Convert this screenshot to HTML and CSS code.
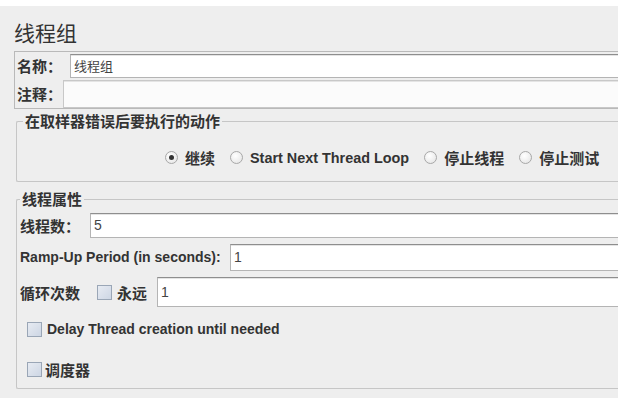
FILE: index.html
```html
<!DOCTYPE html>
<html>
<head>
<meta charset="utf-8">
<title>线程组</title>
<link rel="stylesheet" href="styles.css">
</head>
<body>
<div class="topstrip"></div>
<div class="page">
  <div class="title">线程组</div>

  <div class="namebox">
    <div class="row name-row">
      <span class="label">名称：</span>
      <div class="field">线程组</div>
    </div>
    <div class="row comment-row">
      <span class="label">注释：</span>
      <div class="field comment"></div>
    </div>
  </div>

  <fieldset class="group action">
    <legend>在取样器错误后要执行的动作</legend>
    <div class="radios">
      <span class="opt"><i class="radio on"></i>继续</span>
      <span class="opt en"><i class="radio"></i>Start Next Thread Loop</span>
      <span class="opt"><i class="radio"></i>停止线程</span>
      <span class="opt"><i class="radio"></i>停止测试</span>
    </div>
  </fieldset>

  <fieldset class="group props">
    <legend>线程属性</legend>
    <div class="row threads">
      <span class="label">线程数：</span>
      <div class="field">5</div>
    </div>
    <div class="row ramp">
      <span class="label en">Ramp-Up Period (in seconds):</span>
      <div class="field">1</div>
    </div>
    <div class="row loop">
      <span class="label">循环次数</span>
      <i class="check"></i>
      <span class="label forever">永远</span>
      <div class="field">1</div>
    </div>
    <div class="row chk delay">
      <i class="check"></i>
      <span class="label en">Delay Thread creation until needed</span>
    </div>
    <div class="row chk sched">
      <i class="check"></i>
      <span class="label">调度器</span>
    </div>
  </fieldset>
</div>
</body>
</html>
```

FILE: styles.css
```css
html, body {
  margin: 0;
  padding: 0;
  overflow: hidden;
  background: #eeeeee;
}
body {
  width: 618px;
  height: 398px;
  font-family: "Noto Sans CJK SC", "Liberation Sans", sans-serif;
  color: #2a2a2a;
}
.topstrip {
  height: 6px;
  background: #fff;
}
.page {
  width: 660px;
  padding-left: 14px;
}
.title {
  font-size: 21px;
  line-height: 26px;
  height: 26px;
  padding-top: 13px;
  margin-bottom: 6px;
  color: #333;
}

.row {
  display: flex;
  align-items: center;
}
.label {
  font-size: 15px;
  font-weight: bold;
  white-space: nowrap;
  color: #333;
}
.label.en {
  font-family: "Liberation Sans", "Noto Sans CJK SC", sans-serif;
  font-size: 14px;
}
.field {
  flex: 1;
  height: 21px;
  background: #fff;
  border: 1px solid #b4b4b4;
  border-top-color: #8e8e8e;
  box-shadow: inset 0 1px 0 #e4e4e4;
  font-family: "Liberation Sans", "Noto Sans CJK SC", sans-serif;
  font-size: 14px;
  line-height: 21px;
  padding-left: 3px;
  color: #444;
}

/* name / comment */
.namebox {
  border: 1px solid #b9b9b9;
  border-right: none;
  height: 56px;
}
.name-row {
  height: 27px;
  padding-left: 2px;
}
.name-row .label { width: 53px; }
.name-row .field {
  height: 22px;
  font-family: "Noto Sans CJK SC", sans-serif;
  font-size: 13px;
  font-weight: normal;
  color: #444;
}
.comment-row {
  height: 29px;
  padding-left: 2px;
}
.comment-row .label { width: 46px; }
.comment-row .field.comment {
  height: 26px;
  border-color: #c8c8c8;
  background: #fbfbfb;
}

/* fieldsets */
.group {
  margin: 0 0 0 2px;
  padding: 0;
  border: 1px solid #c6c6c6;
  border-right: none;
  border-radius: 2px;
}
.group legend {
  font-size: 15px;
  font-weight: bold;
  color: #333;
  padding: 0 2px;
  line-height: 18px;
}
.action {
  margin-top: 3px;
  height: 68px;
}
.action legend { margin-left: 6px; }
.radios {
  display: flex;
  align-items: center;
  gap: 15px;
  padding-left: 148px;
  padding-top: 17px;
}
.opt {
  display: flex;
  align-items: center;
  font-size: 15px;
  font-weight: bold;
  color: #333;
  white-space: nowrap;
}
.opt.en {
  font-family: "Liberation Sans", sans-serif;
  font-size: 14.4px;
}
.radio {
  width: 11px;
  height: 11px;
  border-radius: 50%;
  border: 1px solid #a8a8a8;
  background: radial-gradient(circle at 40% 35%, #ffffff, #e2e2e2);
  margin-right: 7px;
  position: relative;
}
.radio.on::after {
  content: "";
  position: absolute;
  left: 3px;
  top: 3px;
  width: 5px;
  height: 5px;
  border-radius: 50%;
  background: #333;
}

.props {
  margin-top: 8px;
  height: 197px;
}
.props legend { margin-left: 3px; }
.props .row { padding-left: 3px; }
.threads {
  height: 28px;
  margin-top: 3px;
}
.threads .label { width: 70px; }
.threads .field { height: 23px; line-height: 23px; }
.ramp {
  height: 30px;
  margin-top: 3px;
}
.ramp .label { width: 210px; }
.ramp .field { height: 25px; line-height: 25px; }
.loop {
  height: 32px;
  margin-top: 4px;
}
.loop .label { width: 77px; }
.loop .label.forever { width: 40px; }
.loop .field { height: 28px; line-height: 28px; }
.check {
  width: 13px;
  height: 13px;
  border: 1px solid #9aa6b6;
  background: linear-gradient(135deg, #e7ebf2, #cdd6e4);
  margin-right: 5px;
}
.chk { padding-left: 10px !important; }
.delay {
  height: 20px;
  margin-top: 11px;
}
.sched {
  height: 20px;
  margin-top: 20px;
}
.sched .check { margin-right: 3px; }
```
